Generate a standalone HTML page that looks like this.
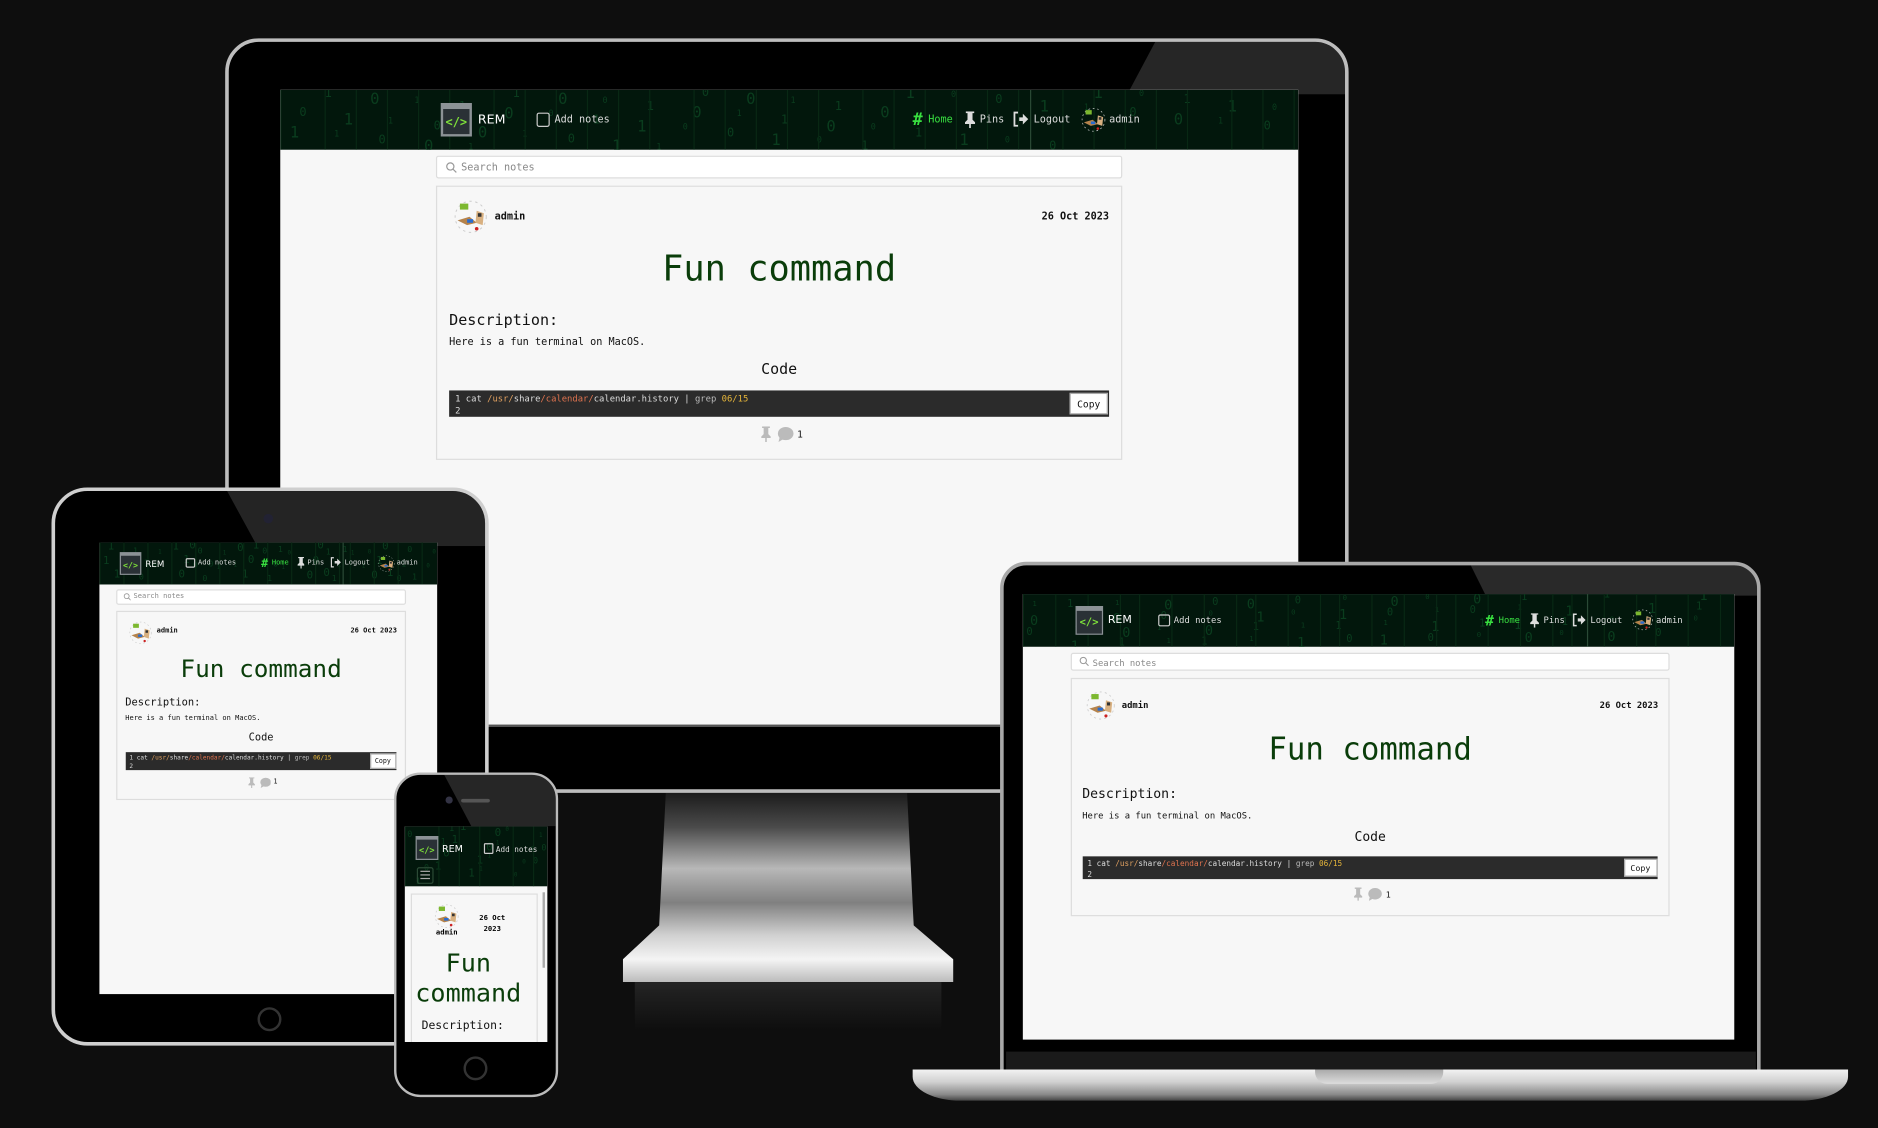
<!DOCTYPE html>
<html><head><meta charset="utf-8">
<style>
*{margin:0;padding:0;box-sizing:border-box}
html,body{width:1878px;height:1128px;overflow:hidden;background:#0e0e0e}
#w{position:absolute;left:0;top:0;width:1568px;height:942px;transform:scale(1.1977);transform-origin:0 0;font-family:"DejaVu Sans Mono","Liberation Mono",monospace;}
.abs{position:absolute}
.frame{position:absolute;background:#000;border:3px solid #b5b5b5;overflow:hidden}
.gloss{position:absolute;background:rgba(255,255,255,0.16)}
.scr{position:absolute;background:#f7f7f7;overflow:hidden}
.nav{position:absolute;left:0;top:0;width:100%;background:#02170c;overflow:hidden}
.dig{position:absolute;color:#0a3d1e;font-size:9px;line-height:1}
.t{position:absolute;white-space:nowrap;line-height:1;transform:translateY(1.2px)}
</style></head><body>
<div id="w">
<!-- MONITOR -->
<div class="frame" style="left:188px;top:32px;width:938px;height:630px;border-radius:28px 28px 6px 6px;border-color:#bdbdbd">
  <div class="gloss" style="left:0;top:0;width:100%;height:100%;clip-path:polygon(83% 0,100% 0,100% 7%,80.5% 7%);background:rgba(255,255,255,0.15)"></div>
</div>
<div class="abs" style="left:191px;top:605px;width:932px;height:2px;background:#555"></div>
<div class="scr" id="desk" style="left:234px;top:75px;width:850px;height:530px"></div>
<!-- stand -->
<div class="abs" style="left:520px;top:662px;width:276px;height:158px;clip-path:polygon(13% 0,86% 0,88% 70%,100% 88%,100% 100%,0 100%,0 88%,11% 70%);background:linear-gradient(#1c1c1c 0%,#4a4a4a 18%,#b8b8b8 40%,#808080 58%,#d0d0d0 75%,#f4f4f4 88%,#bbb 100%)"></div>
<div class="abs" style="left:530px;top:820px;width:256px;height:40px;background:linear-gradient(#242424,#0e0e0e)"></div>

<!-- LAPTOP -->
<div class="frame" style="left:835px;top:469px;width:635px;height:428px;border-radius:22px 22px 0 0;border-color:#a8a8a8">
  <div class="gloss" style="left:0;top:0;width:100%;height:100%;clip-path:polygon(62% 0,100% 0,100% 6%,64% 6%);"></div>
</div>
<div class="scr" id="lap" style="left:854px;top:496px;width:594px;height:372px"></div>
<div class="abs" style="left:840px;top:878px;width:626px;height:16px;background:#1a1a1a"></div>
<div class="abs" style="left:762px;top:893px;width:781px;height:26px;border-radius:0 0 40px 40px/0 0 20px 20px;background:linear-gradient(#f2f2f2,#d0d0d0 40%,#8a8a8a 80%,#444)"></div>
<div class="abs" style="left:1098px;top:893px;width:107px;height:12px;border-radius:0 0 10px 10px;background:linear-gradient(#aaa,#ddd)"></div>

<!-- TABLET -->
<div class="frame" style="left:43px;top:407px;width:365px;height:466px;border-radius:30px;border-color:#cfcfcf">
  <div class="gloss" style="left:0;top:0;width:100%;height:100%;clip-path:polygon(40% 0,100% 0,100% 10%,47% 10%);background:rgba(255,255,255,0.14)"></div>
</div>
<div class="abs" style="left:220px;top:429px;width:8px;height:8px;border-radius:50%;background:#223"></div>
<div class="abs" style="left:215px;top:841px;width:20px;height:20px;border-radius:50%;border:2px solid #333"></div>
<div class="scr" id="tab" style="left:83px;top:453px;width:282px;height:377px"></div>

<!-- PHONE -->
<div class="frame" style="left:329px;top:645px;width:137px;height:271px;border-radius:22px;border-width:2px;border-color:#bbb">
  <div class="gloss" style="left:0;top:0;width:100%;height:100%;clip-path:polygon(30% 0,100% 0,100% 16%,47% 16%);background:rgba(255,255,255,0.15)"></div>
</div>
<div class="abs" style="left:372px;top:665px;width:6px;height:6px;border-radius:50%;background:#334"></div>
<div class="abs" style="left:385px;top:667px;width:24px;height:3px;border-radius:2px;background:#555"></div>
<div class="abs" style="left:387px;top:882px;width:20px;height:20px;border-radius:50%;border:2px solid #333"></div>
<div class="scr" id="ph" style="left:338px;top:690px;width:119px;height:180px"></div>
</div>

<script>
function digits(n,w,h,k){var s='';var ch='0101100110';for(var i=0;i<n;i++){var x=(i*37.3)%w,y=((i*53.7)%h)-5;s+='<div class="dig" style="left:'+x.toFixed(0)+'px;top:'+y.toFixed(0)+'px;font-size:'+(7+(i%3)*3)*k+'px">'+ch[i%10]+'</div>';}
for(var j=0;j<w;j+=Math.round(28*k)){s+='<div class="abs" style="left:'+(j+((j*7)%11))+'px;top:0;width:1px;height:100%;background:#082814"></div>';}return s;}
function logo(x,y,k){return '<div class="abs" style="left:'+x+'px;top:'+y+'px;width:'+26*k+'px;height:'+28*k+'px;border:'+Math.max(1,2*k)+'px solid #8c9296;background:#2a3136;border-top-width:'+5*k+'px"><div class="t" style="left:0;right:0;top:'+6*k+'px;text-align:center;color:#7ee03a;font-weight:bold;font-size:'+10*k+'px">&lt;/&gt;</div></div>';}
function ava(x,y,s){return '<svg class="abs" style="left:'+x+'px;top:'+y+'px" width="'+s+'" height="'+s+'" viewBox="0 0 30 30"><circle cx="15" cy="15" r="13" fill="none" stroke="#ccc" stroke-width="0.8" stroke-dasharray="2 3"/><rect x="6" y="4" width="7" height="5" fill="#7cb82f"/><path d="M4 18 L14 15 L20 20 L12 22Z" fill="#b5834c"/><rect x="12" y="17" width="5" height="3" fill="#2a6dd0"/><path d="M20 10 L26 12 L25 22 L19 20Z" fill="#d8b080"/><rect x="21" y="12" width="3" height="3" fill="#333"/><circle cx="20" cy="25" r="1.5" fill="#c22"/></svg>';}
function pin(x,y,s,c){return '<svg class="abs" style="left:'+x+'px;top:'+y+'px" width="'+s*0.7+'" height="'+s+'" viewBox="0 0 7 10"><path d="M1 0h5v1h-1v4l1.5 1.5v1h-6v-1L2 5V1H1z M3 7.5h1V10h-1z" fill="'+c+'"/></svg>';}
function app(id,o){
 var el=document.getElementById(id),k=o.k,h='';
 var nh=50*k;
 h+='<div class="nav" style="height:'+nh+'px">'+digits(60,o.W,nh,k);
 h+=logo(o.logoX,11*k,k);
 h+='<div class="t" style="left:'+(o.logoX+31*k)+'px;top:'+(19*k)+'px;color:#fff;font-size:'+10.5*k+'px;font-family:\'DejaVu Sans\',sans-serif">REM</div>';
 h+='<div class="abs" style="left:'+o.addX+'px;top:'+19*k+'px;width:'+11*k+'px;height:'+12*k+'px;border:'+Math.max(1,1.3*k)+'px solid #ccc;border-radius:'+2*k+'px"></div>';
 h+='<div class="t" style="left:'+(o.addX+15*k)+'px;top:'+20*k+'px;color:#ddd;font-size:'+8.5*k+'px">Add notes</div>';
 var r=o.homeX;
 h+='<div class="t" style="left:'+r+'px;top:'+17*k+'px;color:#38e040;font-weight:bold;font-size:'+14*k+'px">#</div>';
 h+='<div class="t" style="left:'+(r+13*k)+'px;top:'+20*k+'px;color:#38e040;font-size:'+8.5*k+'px">Home</div>';
 h+=pin(r+43*k,18*k,14*k,'#ddd');
 h+='<div class="t" style="left:'+(r+56*k)+'px;top:'+20*k+'px;color:#ddd;font-size:'+8.5*k+'px">Pins</div>';
 h+='<svg class="abs" style="left:'+(r+84*k)+'px;top:'+18*k+'px" width="'+13*k+'" height="'+13*k+'" viewBox="0 0 13 13"><path d="M4 1H1v11h3" fill="none" stroke="#ddd" stroke-width="1.5"/><path d="M5 5h3V2l4.5 4.5L8 11V8H5z" fill="#ddd"/></svg>';
 h+='<div class="abs" style="left:'+(r+98*k)+'px;top:0;width:1px;height:100%;background:#2a4a36"></div>';
 h+='<div class="t" style="left:'+(r+101*k)+'px;top:'+20*k+'px;color:#ddd;font-size:'+8.5*k+'px">Logout</div>';
 h+=ava(r+140*k,14*k,22*k);
 h+='<div class="t" style="left:'+(r+164*k)+'px;top:'+20*k+'px;color:#ddd;font-size:'+8.5*k+'px">admin</div>';
 h+='</div>';
 var cx=o.cx,cw=o.cw;
 h+='<div class="abs" style="left:'+cx+'px;top:'+o.sy+'px;width:'+cw+'px;height:'+o.sh+'px;background:#fff;border:1px solid #ddd;border-radius:2px"></div>';
 h+='<svg class="abs" style="left:'+(cx+8*k)+'px;top:'+(o.sy+o.sh/2-5*k)+'px" width="'+10*k+'" height="'+10*k+'" viewBox="0 0 10 10"><circle cx="4" cy="4" r="3" fill="none" stroke="#999"/><path d="M6.2 6.2L9 9" stroke="#999"/></svg>';
 h+='<div class="t" style="left:'+(cx+21*k)+'px;top:'+(o.sy+o.sh/2-4.5*k)+'px;color:#888;font-size:'+8.5*k+'px">Search notes</div>';
 var cy=o.cy;
 h+='<div class="abs" style="left:'+cx+'px;top:'+cy+'px;width:'+cw+'px;height:'+229*k+'px;border:1px solid #ddd;background:#f7f7f7"></div>';
 var L=cx+11*k,R=cx+cw-11*k;
 h+=ava(cx+14*k,cy+11*k,30*k);
 h+='<div class="t" style="left:'+(cx+49*k)+'px;top:'+(cy+21*k)+'px;font-weight:bold;font-size:'+8.5*k+'px;color:#111">admin</div>';
 h+='<div class="t" style="right:'+(o.W-R)+'px;top:'+(cy+21*k)+'px;font-weight:bold;font-size:'+8.5*k+'px;color:#111">26 Oct 2023</div>';
 h+='<div class="t" style="left:'+cx+'px;width:'+cw+'px;text-align:center;top:'+(cy+54*k)+'px;font-size:'+29.5*k+'px;color:#0a3d0a">Fun command</div>';
 h+='<div class="t" style="left:'+L+'px;top:'+(cy+105*k)+'px;font-size:'+12.6*k+'px;color:#111">Description:</div>';
 h+='<div class="t" style="left:'+L+'px;top:'+(cy+126*k)+'px;font-size:'+8.5*k+'px;color:#111">Here is a fun terminal on MacOS.</div>';
 h+='<div class="t" style="left:'+cx+'px;width:'+cw+'px;text-align:center;top:'+(cy+146*k)+'px;font-size:'+12.5*k+'px;color:#111">Code</div>';
 var by=cy+171*k;
 h+='<div class="abs" style="left:'+L+'px;top:'+by+'px;width:'+(R-L)+'px;height:'+22*k+'px;background:#2b2b2b"></div>';
 h+='<div class="t" style="left:'+(L+5*k)+'px;top:'+(by+1*k)+'px;font-size:'+7.4*k+'px;color:#ddd;line-height:1.4">1  cat <span style="color:#e0a060">/usr/</span>share<span style="color:#e0734f">/calendar/</span>calendar.history | <span style="color:#bbb">grep</span> <span style="color:#e5b53a">06/15</span><br>2</div>';
 h+='<div class="abs" style="left:'+(R-33*k)+'px;top:'+(by+2*k)+'px;width:'+32*k+'px;height:'+18*k+'px;background:#fff;border:1px solid #aaa"></div>';
 h+='<div class="t" style="left:'+(R-33*k)+'px;width:'+32*k+'px;text-align:center;top:'+(by+7*k)+'px;font-size:'+8*k+'px;color:#111">Copy</div>';
 var ix=cx+cw/2;
 h+=pin(ix-16*k,cy+201*k,13*k,'#bbb');
 h+='<svg class="abs" style="left:'+(ix-2*k)+'px;top:'+(cy+201*k)+'px" width="'+14*k+'" height="'+13*k+'" viewBox="0 0 14 13"><ellipse cx="7" cy="6" rx="6.5" ry="5.5" fill="#bbb"/><path d="M2 9L1 13L6 10z" fill="#bbb"/></svg>';
 h+='<div class="t" style="left:'+(ix+15*k)+'px;top:'+(cy+203*k)+'px;font-size:'+8*k+'px;color:#111">1</div>';
 el.innerHTML=h;
}
app('desk',{k:1,W:850,logoX:134,addX:214,homeX:528,cx:130,cw:573,sy:55,sh:19,cy:80});
app('lap',{k:0.87,W:594,logoX:44,addX:113,homeX:386,cx:40,cw:500,sy:49,sh:15,cy:70});
app('tab',{k:0.69,W:282,logoX:17,addX:72,homeX:135,cx:14,cw:242,sy:39,sh:13,cy:57});
(function(){var el=document.getElementById('ph'),h='';
h+='<div class="nav" style="height:50px">'+digits(25,119,50,0.7)+logo(9,8,0.72);
h+='<div class="t" style="left:31px;top:14px;color:#fff;font-size:8px;font-family:\'DejaVu Sans\',sans-serif">REM</div>';
h+='<div class="abs" style="left:66px;top:14px;width:8px;height:9px;border:1px solid #ccc;border-radius:1px"></div>';
h+='<div class="t" style="left:76px;top:15px;color:#ddd;font-size:6.4px">Add notes</div>';
h+='<div class="abs" style="left:10px;top:34px;width:14px;height:14px;border:1px solid #2b4a35;border-radius:2px"></div>';
h+='<div class="abs" style="left:13px;top:37px;width:8px;height:1px;background:#aaa;box-shadow:0 3px 0 #aaa,0 6px 0 #aaa"></div></div>';
h+='<div class="abs" style="left:5px;top:56px;width:106px;height:130px;border:1px solid #ddd;background:#f7f7f7"></div>';
h+=ava(24,64,22);
h+='<div class="t" style="left:22px;width:26px;text-align:center;top:85px;font-weight:bold;font-size:6px">admin</div>';
h+='<div class="t" style="left:60px;width:26px;text-align:center;top:71px;font-weight:bold;font-size:6px;line-height:1.5">26 Oct<br>2023</div>';
h+='<div class="t" style="left:0;width:106px;text-align:center;top:101px;font-size:21px;color:#0a3d0a;line-height:1.17">Fun<br>command</div>';
h+='<div class="t" style="left:14px;top:161px;font-size:9.5px;color:#111">Description:</div>';
h+='<div class="abs" style="left:115px;top:55px;width:2px;height:63px;background:#aaa"></div>';
el.innerHTML=h;})();
</script>
</body></html>
